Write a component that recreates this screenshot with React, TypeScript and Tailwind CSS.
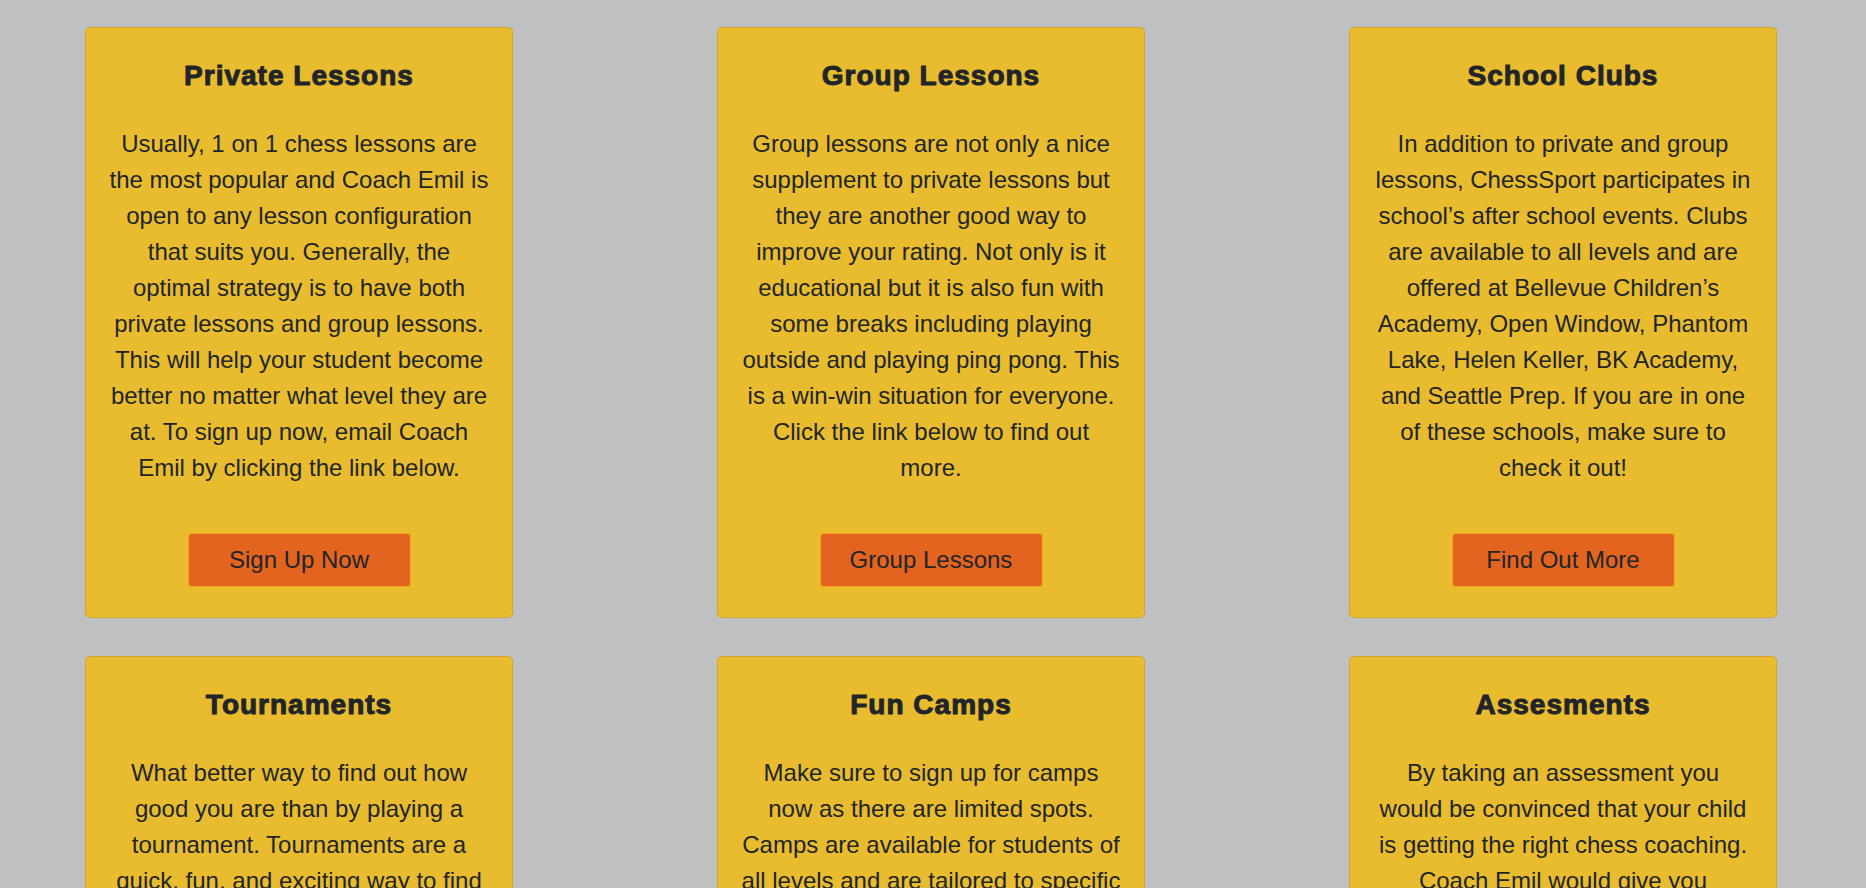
const services = [
  {
    title: "Private Lessons",
    text: "Usually, 1 on 1 chess lessons are the most popular and Coach Emil is open to any lesson configuration that suits you. Generally, the optimal strategy is to have both private lessons and group lessons. This will help your student become better no matter what level they are at. To sign up now, email Coach Emil by clicking the link below.",
    button: "Sign Up Now",
  },
  {
    title: "Group Lessons",
    text: "Group lessons are not only a nice supplement to private lessons but they are another good way to improve your rating. Not only is it educational but it is also fun with some breaks including playing outside and playing ping pong. This is a win-win situation for everyone. Click the link below to find out more.",
    button: "Group Lessons",
  },
  {
    title: "School Clubs",
    text: "In addition to private and group lessons, ChessSport participates in school\u2019s after school events. Clubs are available to all levels and are offered at Bellevue Children\u2019s Academy, Open Window, Phantom Lake, Helen Keller, BK Academy, and Seattle Prep. If you are in one of these schools, make sure to check it out!",
    button: "Find Out More",
  },
  {
    title: "Tournaments",
    text: "What better way to find out how good you are than by playing a tournament. Tournaments are a quick, fun, and exciting way to find out where you stand. Coach Emil helps students get ready for their next big event and find the right tournament for them.",
    button: "See Tournaments",
  },
  {
    title: "Fun Camps",
    text: "Make sure to sign up for camps now as there are limited spots. Camps are available for students of all levels and are tailored to specific skill groups so that every student gets the most out of the week. Click the link below to learn more.",
    button: "Join A Camp",
  },
  {
    title: "Assesments",
    text: "By taking an assessment you would be convinced that your child is getting the right chess coaching. Coach Emil would give you personalized feedback on strengths and weaknesses along with a plan to improve. Sign up below to get started today.",
    button: "Get Assessed",
  },
];

const Card = ({ title, text, button }: { title: string; text: string; button: string }) => {
  return (
    <div className="flex flex-1 flex-col items-center rounded-[5px] border border-[#d2a42b] bg-[#e9bc2f] px-[23px] pt-[30px] pb-[30px] text-center text-[#212529]">
      <h2 className="text-[28px] leading-[36px] font-bold tracking-[1px] [-webkit-text-stroke:1px_#212529]">
        {title}
      </h2>
      <p className="mt-[32px] text-[24px] leading-[36px]">{text}</p>
      <a
        href="#"
        className="mt-[47px] flex h-[54px] w-[223px] items-center justify-center rounded-[4px] border border-[#f3a316] bg-[#e2641f] text-[24px] leading-none"
      >
        {button}
      </a>
    </div>
  );
};

export default function App() {
  return (
    <main className="min-h-screen bg-[#bfc0c2] font-['Liberation_Sans',Arial,sans-serif]">
      <div className="grid grid-cols-[repeat(3,428px)] gap-x-[204px] gap-y-[38px] pt-[27px] pb-10 pl-[85px]">
        {services.map((s) => (
          <div key={s.title} className="flex flex-col">
            <Card {...s} />
          </div>
        ))}
      </div>
    </main>
  );
}
